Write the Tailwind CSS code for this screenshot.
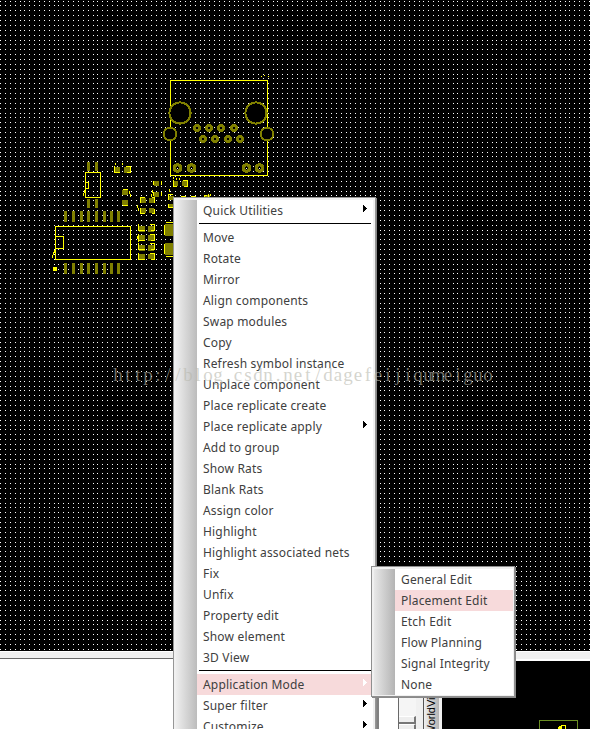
<!DOCTYPE html>
<html lang="en"><head><meta charset="utf-8"><title>PCB Editor</title>
<script src="https://cdn.jsdelivr.net/npm/@tailwindcss/browser@4"></script></head>
<body class="bg-white">
<main class="relative w-[590px] h-[729px] overflow-hidden bg-white font-['Noto_Sans','Open_Sans',sans-serif] text-[12px] text-[#404040]">
<div class="flex flex-col h-full">
 <svg class="block w-full h-[651px] shrink-0 bg-black" viewBox="0 0 590 651" shape-rendering="crispEdges">
  <path id="grid" fill="#fff"/>
  <g id="parts"></g>
 </svg>
 <div class="h-[7px] shrink-0 bg-[#f0f0f0] border-t border-white"></div>
 <div class="h-px shrink-0 bg-[#f0f0f0]"><div class="h-px w-[377px] bg-[#696969]"></div></div>
 <div class="flex flex-1 bg-white">
  <div class="w-[377px]"></div>
  <div class="w-[21px] border-l-2 border-[#808080] bg-white"></div>
  <div class="w-[18px] border-l border-[#696969] bg-[#f5f5f5] flex flex-col justify-end">
    <div class="h-[8px] border-t border-t-white border-b-2 border-r-2 border-b-[#777] border-r-[#777] bg-[#eee]"></div><div class="h-[5px] border-t border-t-white border-r-2 border-r-[#777] bg-[#eee]"></div>
  </div>
  <div class="w-[7px] bg-[#f0f0f0]"></div>
  <div class="w-[16px] border-l border-[#555] bg-linear-to-r from-[#f0f0f0] to-[#b5b5b5] relative overflow-hidden"><div class="absolute left-0 bottom-[-7px] [writing-mode:vertical-rl] rotate-180 font-['Liberation_Sans',sans-serif] text-[11px] leading-[14px] text-black">WorldVi+</div></div>
  <div class="w-[3px] bg-[#f0f0f0]"></div>
  <div class="flex-1 bg-black border-t-2 border-white relative"><div class="absolute left-[97px] bottom-0 w-[39px] h-[9px] border border-b-0 border-[#6b8e23]"><svg class="absolute left-[18px] top-[4px]" width="9" height="4" shape-rendering="crispEdges"><path d="M3 0h5v4h-1v-3h-3v1h-1zM1 1h2v1h1v2h-4v-2h1z" fill="#ff0"/></svg></div></div>
 </div>
</div>
<section id="menu" class="absolute left-[173px] top-[197px] w-[203px] h-[540px] border border-[#969696] bg-[#f0f0f0] p-[2px] shadow-[1px_1px_0px_#8a8a8a]">
 <div class="h-full flex bg-white"><div class="w-[21px] shrink-0 bg-linear-to-r from-[#eee] to-[#bcbcbc]"></div><div id="items" class="flex-1"></div></div>
</section>
<div class="absolute left-[113px] top-[364px] flex font-['Liberation_Serif',serif] text-[19px] leading-[22px] text-[#b8b8ad]/60" id="wm"></div>
<section class="absolute left-[371px] top-[566px] w-[144px] h-[131px] border border-[#8f8f8f] bg-[#f0f0f0] p-[2px] pr-px pb-px shadow-[1px_1px_0px_#8a8a8a]">
 <div class="h-full flex bg-white"><div class="w-[21px] shrink-0 bg-linear-to-r from-[#e8e8e8] to-[#b4b4b4]"></div><div id="sub" class="flex-1"></div></div>
</section>
</main>
<script>
const PX=4.866,PY=4.874;let d='';
for(let j=0;j<134;j++){const y=Math.floor(j*PY+1.01);if(y<651)for(let i=0;i<122;i++)d+=`M${Math.floor(i*PX+.55)} ${y}h1v1h-1z`}
document.getElementById('grid').setAttribute('d',d);
let s='';
const pad=(x,y,w,h)=>s+=`<rect x="${x}" y="${y}" width="${w}" height="${h}" fill="#808000"/>`;
const box=(x,y,w,h)=>s+=`<rect x="${x+.5}" y="${y+.5}" width="${w-1}" height="${h-1}" fill="none" stroke="#ff0"/>`;
const line=p=>s+=`<path d="${p}" fill="none" stroke="#ff0"/>`;
box(170,80,98,96);
for(const [x,y,r] of [[180,113,10.6],[256,113,10.6],[170,134,6.3],[267,134,6.3]])s+=`<circle cx="${x}" cy="${y}" r="${r}" fill="#000" stroke="#808000" stroke-width="2"/>`;
for(const [x,y] of [[197,128],[209,128],[221,128],[234,128],[203,139],[215,139],[228,139],[240,139]])s+=`<circle cx="${x}" cy="${y}" r="2.7" fill="#000" stroke="#808000" stroke-width="2.6"/>`;
for(const [x,y] of [[177.5,168],[191.5,168],[246.5,168],[259.5,168]])s+=`<circle cx="${x}" cy="${y}" r="3.3" fill="#000" stroke="#808000" stroke-width="3.2"/><rect x="${x-.5}" y="${y-.5}" width="1" height="1" fill="#fff"/>`;
for(const y of [162,199])for(const x of [87,95])pad(x,y,3,9);
box(85,172,16,26);line('M86 182.5h2.5v6h-2.5M84.5 190v3M83.5 193v3');
for(const x of [64,72,80,87,95,103,110,117])for(const y of [211,263])pad(x,y,3,11);
box(55,226,76,34);box(55,236,9,13);
s+='<rect x="53" y="267" width="4" height="4" fill="#ff0"/>';
line('M54.5 250v3M53.5 252v3M52.5 255v3');
for(const [x,y,w,h] of [[114,167,6,6],[124,167,6,6],[122,190,6,5],[122,200,6,5],[154,181,5,5],[154,192,5,5],[141,198,5,5],[149,198,5,5],[141,208,5,5],[149,208,5,5],[139,226,6,6],[148,226,6,6],[139,235,6,6],[148,235,6,6],[139,245,6,6],[148,245,6,6],[139,254,6,5],[148,254,6,5],[165,224,9,12],[165,243,9,12],[173,181,5,5],[182,181,5,5],[169,196,5,4],[169,204,5,4],[205,195,5,4]])pad(x,y,w,h);
line('M114.5 166v6.5h5M126 166.5h4.5v6h-4M123 189.5h5M123 205.5h5M153.5 181v4M161.5 181v4M153.5 192v4M161.5 192v4M140.5 203v-5.5h4M152 197.5h2.5v5M140.5 208v5.5h4M152 213.5h2.5v-5');
for(const y of [224,234,243,253])line(`M138.5 ${y}v6.5h6M150 ${y+.5}h4.5v6h-4`);
line('M166 222.5h8M164.5 225v10M164.5 244v10M166 256.5h8M173.5 180v6.5h3M183 180.5h4.5v6h-4M168.5 200v-5.5h4M168.5 204v3.5h4M181 196.5h5M191 196.5h5M204.5 199v-3.5h2M208.5 194v3');
line('M115.5 163v2M122.5 163v2M129.5 191v3M130.5 194v3M152.5 190v3M151.5 194v3M137.5 205v3M138.5 208v3M137.5 236v3M138.5 239v3M261 76.5h1M264 75.5h1M268 76.5h1M173.5 177v2M176.5 178v2M179.5 178v2M210.5 194v2M169.5 189v3');
document.getElementById('parts').innerHTML=s;
document.getElementById('wm').innerHTML=[...'http://blog.csdn.net/dagefeijiqumeiguo'].map(c=>`<span class="w-[10px] flex justify-center">${c}</span>`).join('');
const row=(t,a,h)=>`<div class="${h?'bg-[#f7dadb]':''} relative h-[21px] pl-[6px] leading-[21px] tracking-[0.18px] whitespace-nowrap"><span>${t}</span>${a?`<svg class="absolute right-[6px] top-[5px]" width="4" height="7" shape-rendering="crispEdges"><path d="M0 0h1v1h1v1h1v1h1v1h-1v1h-1v1h-1v1h-1z" fill="${h?'#fff':'#000'}"/></svg>`:''}</div>`;
const sep='<div class="h-[6px] px-[2px] pt-[2px]"><div class="h-px bg-black"></div></div>';
document.getElementById('items').innerHTML=row('Quick Utilities',1)+sep+['Move','Rotate','Mirror','Align components','Swap modules','Copy','Refresh symbol instance','Unplace component','Place replicate create','Place replicate apply','Add to group','Show Rats','Blank Rats','Assign color','Highlight','Highlight associated nets','Fix','Unfix','Property edit','Show element','3D View'].map(t=>row(t,t.endsWith('apply'))).join('')+sep+row('Application Mode',1,1)+row('Super filter',1)+row('Customize',1);
document.getElementById('sub').innerHTML=['General Edit','Placement Edit','Etch Edit','Flow Planning','Signal Integrity','None'].map((t,i)=>row(t,0,i==1)).join('');
</script></body></html>
